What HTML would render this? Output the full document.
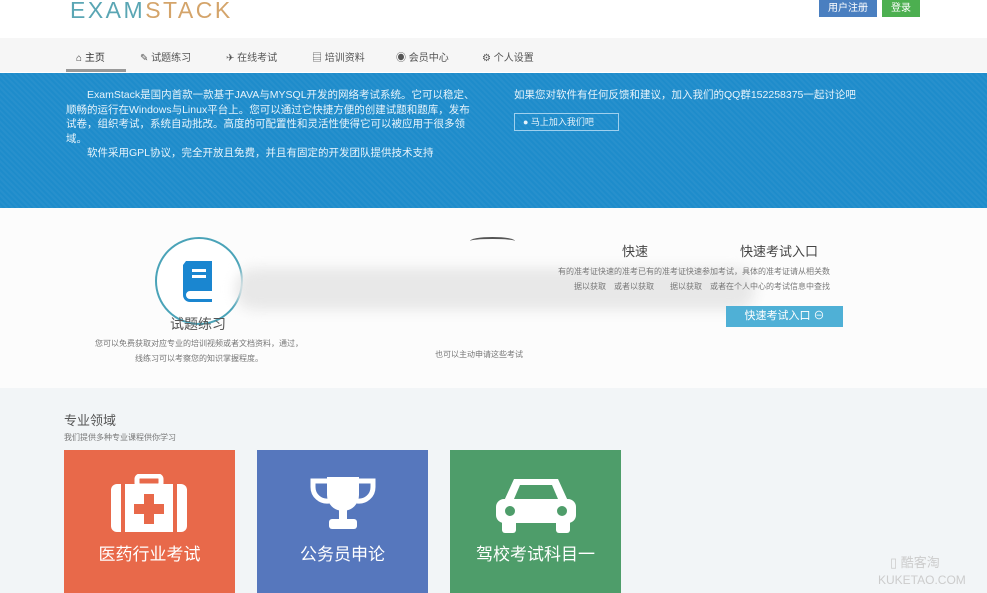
<!DOCTYPE html>
<html><head><meta charset="utf-8">
<style>
*{margin:0;padding:0;box-sizing:border-box}
body{width:987px;height:593px;overflow:hidden;background:#fff;font-family:"Liberation Sans","Noto Sans CJK SC",sans-serif;position:relative}
.abs{position:absolute}
.logo{left:70px;top:-3px;font-size:23px;letter-spacing:2.5px;color:#5aa6b4;font-weight:300}
.logo span{color:#d4a46a}
.btn{top:0;height:17px;font-size:10px;color:#fff;line-height:17px;text-align:center}
.nav{left:0;top:38px;width:987px;height:34px;background:#f6f6f6}
.nav div{position:absolute;top:11px;font-size:10px;color:#555}
.band{left:0;top:73px;width:987px;height:135px;background:#1e8ccb;
background-image:repeating-linear-gradient(45deg,rgba(255,255,255,.04) 0 2px,transparent 2px 4px)}
.band p{color:#e6f3fb;font-size:10.5px;line-height:14.5px}
.mid{left:0;top:208px;width:987px;height:180px;background:#fcfcfc}
.gray{left:0;top:388px;width:987px;height:205px;background:#f2f5f7}
.tile{top:450px;width:171px;height:143px;color:#fff;font-size:17px;text-align:center}
.tile .t{position:absolute;left:0;right:0;top:90px}
.sm{font-size:8px;color:#777}
</style></head><body>
<div class="abs logo">EXAM<span>STACK</span></div>
<div class="abs btn" style="left:819px;width:58px;background:#4a7fc0">用户注册</div>
<div class="abs btn" style="left:882px;width:38px;background:#4caf50">登录</div>

<div class="abs nav">
<div style="left:76px;color:#333">⌂ 主页</div>
<div style="left:140px">✎ 试题练习</div>
<div style="left:226px">✈ 在线考试</div>
<div style="left:312px">▤ 培训资料</div>
<div style="left:396px">◉ 会员中心</div>
<div style="left:482px">⚙ 个人设置</div>
</div>
<div class="abs" style="left:66px;top:69px;width:60px;height:3px;background:#999"></div>

<div class="abs band">
<p class="abs" style="left:66px;top:15px;width:410px">　　ExamStack是国内首款一款基于JAVA与MYSQL开发的网络考试系统。它可以稳定、顺畅的运行在Windows与Linux平台上。您可以通过它快捷方便的创建试题和题库，发布试卷，组织考试，系统自动批改。高度的可配置性和灵活性使得它可以被应用于很多领域。<br>　　软件采用GPL协议，完全开放且免费，并且有固定的开发团队提供技术支持</p>
<p class="abs" style="left:514px;top:15px">如果您对软件有任何反馈和建议，加入我们的QQ群152258375一起讨论吧</p>
<div class="abs" style="left:514px;top:40px;width:105px;height:18px;border:1px solid #9fd0ee;color:#e6f3fb;font-size:9px;line-height:16px;padding-left:8px">● 马上加入我们吧</div>
</div>

<div class="abs mid"></div>
<div class="abs" style="left:155px;top:237px;width:88px;height:88px;border:2px solid #4aa3b8;border-radius:50%;background:#fff"></div>
<svg class="abs" style="left:178px;top:257px" width="40" height="46"><path d="M8 4h26v30H12a4 4 0 0 0 0 8h22v3H12a7 7 0 0 1-7-7V8z" fill="#1a86d0"/><rect x="14" y="12" width="14" height="3" fill="#fff"/><rect x="14" y="18" width="14" height="3" fill="#fff"/></svg>
<div class="abs" style="left:170px;top:314px;font-size:14px;color:#555">试题练习</div>
<div class="abs sm" style="left:64px;top:336px;width:270px;text-align:center;line-height:15px">您可以免费获取对应专业的培训视频或者文档资料，通过，<br>线练习可以考察您的知识掌握程度。</div>
<div class="abs" style="left:470px;top:237px;width:45px;height:8px;border-top:2px solid #555;border-radius:50% 50% 0 0"></div>
<div class="abs" style="left:235px;top:268px;width:520px;height:42px;background:#e8e8e8;filter:blur(6px);border-radius:20px"></div>
<div class="abs" style="left:622px;top:241px;font-size:13px;color:#444">快速</div>
<div class="abs" style="left:740px;top:241px;font-size:13px;color:#444">快速考试入口</div>
<div class="abs sm" style="left:558px;top:264px;width:365px;line-height:15px">有的准考证快速的准考已有的准考证快速参加考试，具体的准考证请从相关数<br>　　据以获取　或者以获取　　据以获取　或者在个人中心的考试信息中查找</div>
<div class="abs" style="left:726px;top:306px;width:117px;height:21px;background:#4fb0d6;color:#fff;font-size:11px;line-height:21px;text-align:center">快速考试入口 ⊖</div>
<div class="abs sm" style="left:435px;top:349px">也可以主动申请这些考试</div>

<div class="abs gray"></div>
<div class="abs" style="left:64px;top:410px;font-size:13px;color:#555">专业领域</div>
<div class="abs sm" style="left:64px;top:432px">我们提供多种专业课程供你学习</div>

<div class="abs tile" style="left:64px;background:#e8694a">
<svg class="abs" style="left:47px;top:24px" width="76" height="58"><rect x="26" y="2" width="24" height="10" rx="3" fill="none" stroke="#fff" stroke-width="5"/><rect x="0" y="10" width="76" height="48" rx="6" fill="#fff"/><rect x="10" y="10" width="4" height="48" fill="#e8694a"/><rect x="62" y="10" width="4" height="48" fill="#e8694a"/><rect x="33" y="20" width="10" height="30" fill="#e8694a"/><rect x="23" y="30" width="30" height="10" fill="#e8694a"/></svg>
<div class="t">医药行业考试</div></div>
<div class="abs tile" style="left:257px;background:#5677bd">
<svg class="abs" style="left:48px;top:25px" width="76" height="58"><path d="M22 2h32v18a16 16 0 0 1-32 0z" fill="#fff"/><path d="M22 6H8v6a14 14 0 0 0 16 14M54 6h14v6a14 14 0 0 1-16 14" fill="none" stroke="#fff" stroke-width="5"/><rect x="34" y="34" width="8" height="10" fill="#fff"/><rect x="24" y="44" width="28" height="10" rx="3" fill="#fff"/></svg>
<div class="t">公务员申论</div></div>
<div class="abs tile" style="left:450px;background:#4e9d6a">
<svg class="abs" style="left:44px;top:25px" width="84" height="60"><path d="M20 4h44l10 22H10z" fill="#fff"/><path d="M26 10h32l6 14H20z" fill="#4e9d6a"/><rect x="2" y="24" width="80" height="24" rx="8" fill="#fff"/><rect x="8" y="44" width="14" height="14" rx="3" fill="#fff"/><rect x="62" y="44" width="14" height="14" rx="3" fill="#fff"/><circle cx="16" cy="36" r="5" fill="#4e9d6a"/><circle cx="68" cy="36" r="5" fill="#4e9d6a"/></svg>
<div class="t">驾校考试科目一</div></div>

<div class="abs" style="left:890px;top:552px;font-size:13px;color:#ccc">▯ 酷客淘</div>
<div class="abs" style="left:878px;top:573px;font-size:12px;color:#ccc">KUKETAO.COM</div>
</body></html>
